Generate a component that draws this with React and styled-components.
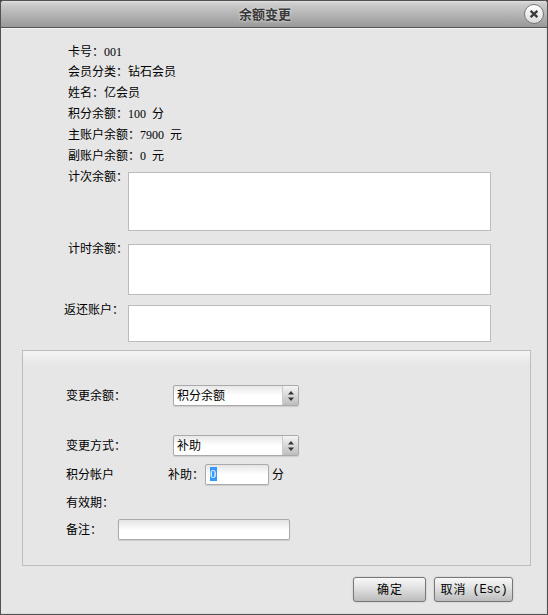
import React, { useState } from 'react';
import styled, { createGlobalStyle } from 'styled-components'


const infos = [
  { label: '卡号', value: '001' },
  { label: '会员分类', text: '钻石会员' },
  { label: '姓名', text: '亿会员' },
  { label: '积分余额', value: '100', unit: '分' },
  { label: '主账户余额', value: '7900', unit: '元' },
  { label: '副账户余额', value: '0', unit: '元' },
];


function Select({ value }) {
  return (
    <SelectBox>
      <SelectValue>{value}</SelectValue>
      <SelectArrows>
        <svg width="6" height="10" viewBox="0 0 6 10">
          <path d="M3 0 L6 3.6 H0 Z M3 10 L6 6.4 H0 Z" fill="#333" />
        </svg>
      </SelectArrows>
    </SelectBox>
  );
}


function App() {
  const [remark, setRemark] = useState('');

  return (
    <>
      <GlobalStyle />
      <Dialog>
        <TitleBar>
          <Title>余额变更</Title>
          <CloseButton type="button" aria-label="关闭">
            <svg width="10" height="8" viewBox="0 0 10 8">
              <path d="M1.6 0.8 L8.4 7.2 M8.4 0.8 L1.6 7.2" stroke="#3c3c3c" strokeWidth="2.3" />
            </svg>
          </CloseButton>
        </TitleBar>

        <Content>
          {/* Card details */}
          <InfoList>
            {infos.map((info) => (
              <InfoRow key={info.label}>
                {info.label}：{info.text}
                {info.value && <Latin>{info.value}</Latin>}
                {info.unit && <Unit>{info.unit}</Unit>}
              </InfoRow>
            ))}
          </InfoList>

          {/* Balance lists */}
          <ListRow $height={59} $gap={7}>
            <ListLabel>计次余额：</ListLabel>
            <ListBox />
          </ListRow>
          <ListRow $height={51} $gap={13}>
            <ListLabel>计时余额：</ListLabel>
            <ListBox />
          </ListRow>
          <ListRow $height={37} $gap={10}>
            <ListLabel $outdent={4}>返还账户：</ListLabel>
            <ListBox />
          </ListRow>

          {/* Change form */}
          <Panel>
            <FormRow $gap={0}>
              <FormLabel $width={107}>变更余额：</FormLabel>
              <Select value="积分余额" />
            </FormRow>
            <FormRow $gap={29}>
              <FormLabel $width={107}>变更方式：</FormLabel>
              <Select value="补助" />
            </FormRow>
            <FormRow $gap={8}>
              <FormLabel $width={102}>积分帐户</FormLabel>
              <FormLabel $width={37}>补助：</FormLabel>
              <AmountField>
                <Selected>0</Selected>
              </AmountField>
              <FormLabel>分</FormLabel>
            </FormRow>
            <FormRow $gap={7}>
              <FormLabel>有效期：</FormLabel>
            </FormRow>
            <FormRow $gap={6}>
              <FormLabel $width={52}>备注：</FormLabel>
              <RemarkInput value={remark} onChange={(e) => setRemark(e.target.value)} />
            </FormRow>
          </Panel>
        </Content>

        <Footer>
          <Button $width={73}>确定</Button>
          <Button $width={79}>取消<ButtonKey>(Esc)</ButtonKey></Button>
        </Footer>
      </Dialog>
    </>
  );
}



// CSS ----------------------------------------------------------------

const GlobalStyle = createGlobalStyle`
	* {
		box-sizing: border-box;
	}
	body {
		margin: 0;
		background: #4a4245;
		color: #000;
		font-family: "Noto Sans CJK SC", sans-serif;
		font-size: 12px;
	}
`

const Dialog = styled.div`
	display: flex;
	flex-direction: column;
	width: 548px;
	height: 615px;
	border: 1px solid #515151;
	border-radius: 4px 4px 0 0;
	background: #e6e6e6;
	overflow: hidden;
`

const TitleBar = styled.div`
	display: flex;
	align-items: center;
	height: 27px;
	flex: none;
	padding: 0 3px 0 5px;
	border-bottom: 1px solid #555;
	background: linear-gradient(#d9d7da, #c6c6c6 20%, #999);
	box-shadow: inset 0 1px 0 #e0dde2;
`

const Title = styled.div`
	flex: 1;
	color: #393939;
	font-size: 13px;
	font-weight: bold;
	line-height: 26px;
	text-align: center;
	text-shadow: 0 0 3px #eee;
`

const CloseButton = styled.button`
	display: flex;
	align-items: center;
	justify-content: center;
	width: 20px;
	height: 20px;
	padding: 0;
	border: 1px solid #777;
	border-radius: 50%;
	background: linear-gradient(#fff, #dcdcdc);
`

const Content = styled.div`
	flex: 1;
	padding: 12px 16px 0 21px;
	border-right: 1px solid #dadada;
	box-shadow: inset 0 1px 0 #f2f2f2;
`

const InfoList = styled.div`
	padding-left: 46px;
`

const InfoRow = styled.div`
	height: 21px;
	line-height: 21px;
	white-space: nowrap;

	&:first-child {
		height: 20px;
	}
`

const Latin = styled.span`
	font-family: "Liberation Serif", serif;
	font-size: 12px;
`

const Unit = styled.span`
	margin-left: 6px;
`

const ListRow = styled.div`
	display: flex;
	height: ${(props) => props.$height}px;
	margin-top: ${(props) => props.$gap}px;
`

const ListLabel = styled.div`
	width: 106px;
	flex: none;
	padding-left: ${(props) => 46 - (props.$outdent || 0)}px;
	line-height: 7px;
	white-space: nowrap;
`

const ListBox = styled.div`
	width: 363px;
	border: 1px solid #bcbcbc;
	background: #fff;
`

const Panel = styled.div`
	width: 509px;
	height: 216px;
	margin-top: 8px;
	padding: 34px 0 0 43px;
	border: 1px solid #bdbdbd;
	background: linear-gradient(#f5f5f5, #e6e6e6 14px);
`

const FormRow = styled.div`
	display: flex;
	height: 21px;
	margin-top: ${(props) => props.$gap}px;
`

const FormLabel = styled.span`
	flex: none;
	width: ${(props) => (props.$width ? props.$width + 'px' : 'auto')};
	line-height: 19px;
	white-space: nowrap;
`

const SelectBox = styled.div`
	display: flex;
	width: 126px;
	height: 21px;
	border: 1px solid #aaa;
	border-radius: 2px;
	background: linear-gradient(#e8e8e8, #fff 50%);
	box-shadow: 0 1px 1px #ccc;
`

const SelectValue = styled.div`
	flex: 1;
	padding-left: 3px;
	line-height: 17px;
`

const SelectArrows = styled.div`
	display: flex;
	align-items: center;
	justify-content: center;
	width: 16px;
	border-left: 1px solid #ccc;
	background: linear-gradient(#f4f4f4, #bdbdbd);
`

const AmountField = styled.div`
	width: 64px;
	height: 21px;
	margin-right: 3px;
	padding: 2px 0 0 4px;
	border: 1px solid #aaa;
	border-radius: 2px;
	background: linear-gradient(#e6e6e6, #fff 50%);
	box-shadow: 0 1px 1px #ccc;
`

const Selected = styled.div`
	width: 7px;
	height: 14px;
	background: #3399ff;
	color: #fff;
	font-family: "Liberation Serif", serif;
	font-size: 12px;
	line-height: 14px;
`

const RemarkInput = styled.input`
	width: 172px;
	height: 21px;
	padding: 0 4px;
	border: 1px solid #aaa;
	border-radius: 2px;
	outline: none;
	background: linear-gradient(#e4e4e4, #fff 55%);
	box-shadow: 0 1px 1px #ccc;
	font: inherit;
`

const Footer = styled.div`
	display: flex;
	justify-content: flex-end;
	gap: 8px;
	height: 37px;
	flex: none;
	padding-right: 33px;
	border-right: 1px solid #dadada;
	border-bottom: 1px solid #dadada;
`

const Button = styled.button`
	display: flex;
	align-items: center;
	justify-content: center;
	width: ${(props) => props.$width}px;
	height: 25px;
	padding: 0 0 2px 1px;
	border: 1px solid #777;
	border-radius: 3px;
	background: linear-gradient(#f8f8f8, #e0e0e0 45%, #bcbcbc);
	box-shadow: 0 0 2px #bbb;
	color: #000;
	font-family: inherit;
	font-size: 12px;
	letter-spacing: 1px;
`

const ButtonKey = styled.span`
	margin-left: 6px;
	font-family: "Liberation Mono", monospace;
	font-size: 12px;
	line-height: 14px;
	padding-top: 2px;
	letter-spacing: -0.2px;
`


export default App;
